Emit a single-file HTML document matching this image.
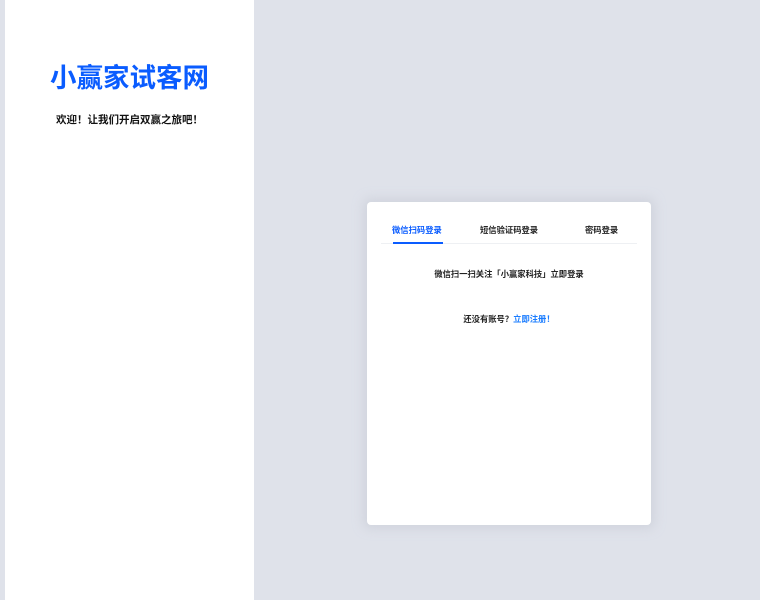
<!DOCTYPE html>
<html><head><meta charset="utf-8"><style>
body{margin:0;width:760px;height:600px;background:#dfe2ea;position:relative;overflow:hidden;font-family:"Liberation Sans","Noto Sans CJK SC",sans-serif;}
.left{position:absolute;left:5px;top:0;width:249px;height:600px;background:#fff;}
.t{position:absolute;left:0;width:249px;text-align:center;}
.card{position:absolute;left:367px;top:202px;width:284px;height:323px;background:#fff;border-radius:4px;box-shadow:0 0 10px 4px rgba(200,204,214,.6);}
.tab{position:absolute;top:22px;font-size:8.3px;font-weight:bold;color:#222;}
</style></head><body>
<div class="left">
<div class="t" style="top:60px;font-size:26.5px;font-weight:bold;color:#0a5cff;line-height:36px;">小赢家试客网</div>
<div class="t" style="top:112px;font-size:10.5px;font-weight:bold;color:#111;line-height:16px;">欢迎！让我们开启双赢之旅吧！</div>
</div>
<div class="card">
<div class="tab" style="left:25px;color:#0a5cff">微信扫码登录</div>
<div class="tab" style="left:113px">短信验证码登录</div>
<div class="tab" style="left:218px">密码登录</div>
<div style="position:absolute;left:14px;top:41px;width:256px;height:1px;background:#eef0f3"></div>
<div style="position:absolute;left:26px;top:40px;width:50px;height:2px;background:#0a5cff"></div>
<div style="position:absolute;left:0;width:284px;top:66px;text-align:center;font-size:8.3px;font-weight:bold;color:#222">微信扫一扫关注「小赢家科技」立即登录</div>
<div style="position:absolute;left:0;width:284px;top:111px;text-align:center;font-size:8.3px;font-weight:bold;color:#222">还没有账号？<span style="color:#1a7cff">立即注册！</span></div>
</div>
</body></html>
